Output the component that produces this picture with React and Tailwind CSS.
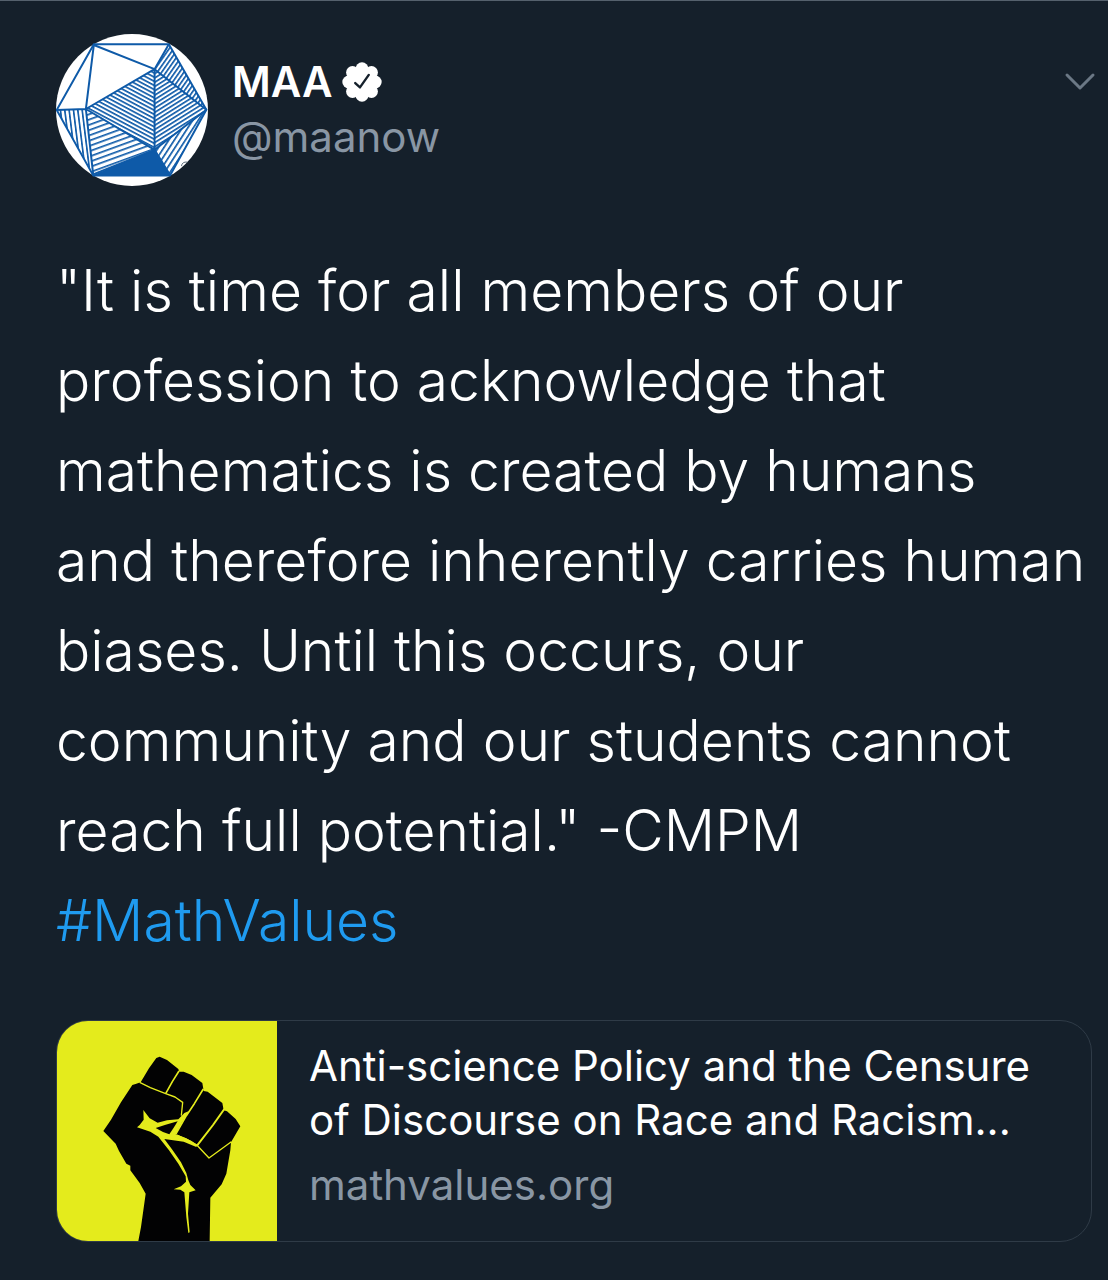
import React from "react";

const TWEET_LINES = [
  "\"It is time for all members of our",
  "profession to acknowledge that",
  "mathematics is created by humans",
  "and therefore inherently carries human",
  "biases. Until this occurs, our",
  "community and our students cannot",
  "reach full potential.\" -CMPM",
];

function Avatar() {
  return (
    <svg viewBox="28 24 458 458" className="size-[152px] shrink-0" role="img" aria-label="MAA logo">
      <defs>
        <pattern id="fallLeft" width="12" height="11" patternUnits="userSpaceOnUse" patternTransform="rotate(28 118 250)">
          <rect width="12" height="5" fill="#0e5aa8" />
        </pattern>
        <pattern id="fallRight" width="12" height="11" patternUnits="userSpaceOnUse" patternTransform="rotate(-32 325 373)">
          <rect width="12" height="5" fill="#0e5aa8" />
        </pattern>
        <pattern id="steepRight" width="11" height="12" patternUnits="userSpaceOnUse" patternTransform="rotate(35 368 55)">
          <rect width="5" height="12" fill="#0e5aa8" />
        </pattern>
        <pattern id="steepLeft" width="13" height="12" patternUnits="userSpaceOnUse" patternTransform="rotate(-7 118 250)">
          <rect width="5" height="12" fill="#0e5aa8" />
        </pattern>
        <pattern id="shallow" width="12" height="15" patternUnits="userSpaceOnUse" patternTransform="rotate(-20 140 447)">
          <rect width="12" height="5" fill="#0e5aa8" />
        </pattern>
        <pattern id="lowerRight" width="14" height="12" patternUnits="userSpaceOnUse" patternTransform="rotate(33 372 450)">
          <rect width="5" height="12" fill="#0e5aa8" />
        </pattern>
      </defs>
      <circle cx="257" cy="253" r="229" fill="#fff" />
      <path d="M118 250L325 130V373Z" fill="url(#fallLeft)" />
      <path d="M325 130L480 252L325 373Z" fill="url(#fallRight)" />
      <path d="M368 55L325 130L480 252Z" fill="url(#steepRight)" />
      <path d="M30 253H118L140 447Z" fill="url(#steepLeft)" />
      <path d="M118 250L325 373L140 447Z" fill="url(#shallow)" />
      <path d="M325 373L480 252L372 450Z" fill="url(#lowerRight)" />
      <path d="M140 449L325 371L374 451Z" fill="#0e5aa8" />
      <g fill="none" stroke="#0e5aa8" strokeWidth="6" strokeLinejoin="round">
        <path d="M142 55H368L481 252L372 450H140L30 253Z" />
        <path d="M142 57L325 130L368 55M142 57L118 250L30 253M118 250L325 130V373L118 250L140 447L325 373L372 450M325 130L481 252L325 373" />
      </g>
      <path d="M406 422q2-14 18-12" fill="none" stroke="#5b6b79" strokeWidth="3" />
    </svg>
  );
}

function VerifiedBadge() {
  return (
    <svg viewBox="0 0 118 118" className="size-[40px]" role="img" aria-label="Verified account">
      <g fill="#fff">
        <circle cx="59" cy="59" r="46" />
        <circle cx="59" cy="20" r="19" />
        <circle cx="87" cy="31" r="19" />
        <circle cx="98" cy="59" r="19" />
        <circle cx="87" cy="87" r="19" />
        <circle cx="59" cy="98" r="19" />
        <circle cx="31" cy="87" r="19" />
        <circle cx="20" cy="59" r="19" />
        <circle cx="31" cy="31" r="19" />
      </g>
      <path d="M39 62L53 75L79 38" fill="none" stroke="#15202b" strokeWidth="7" strokeLinecap="round" strokeLinejoin="round" />
    </svg>
  );
}

function RaisedFist() {
  return (
    <svg viewBox="20 22 660 660" className="size-[220px] shrink-0 bg-[#e4eb1c]" role="img" aria-label="Raised fist">
      <path d="M264 682L272 640L286 540L268 508L240 470V456L228 450L206 412L196 390L180 374L159 352L182 318L212 266L246 214L258 210L271 206L296 164L318 133L328 129L350 139L384 166L387 174L400 174L424 184L456 208L460 232L472 234L516 268L520 290L530 293L556 316L570 338L542 386L540 410L528 480L514 512L480 552L478 682Z" fill="#020203" />
      <g fill="none" stroke="#e4eb1c" strokeWidth="4" strokeLinejoin="round">
        <path d="M268 206L300 222L346 240L374 250L397 266L393 306" />
        <path d="M386 172L366 204L346 240" strokeWidth="5" />
        <path d="M459 226L432 270L408 306L376 362" strokeWidth="5" />
        <path d="M522 286L488 334L440 396" strokeWidth="6" />
        <path d="M380 364L420 382L440 395L476 433L508 410L543 384" />
      </g>
      <g fill="#e4eb1c">
        <path d="M279 289L298 314L322 327L350 320L384 317L402 298L416 292L394 328L376 362L408 374L442 394L438 400L400 384L342 376L366 408L392 446L408 478L414 500L420 514L436 530L417 536L413 600L418 656L414 658L408 610L402 536L390 528L370 527L392 518L407 504L406 488L384 450L356 410L324 369L300 354L260 341L268 334L280 318Z" />
      </g>
      <path d="M316 343L346 333L382 323L370 342L357 362L338 355Z" fill="#020203" />
    </svg>
  );
}

export default function App() {
  return (
    <main className="min-h-screen border-t border-[#55616d] bg-[#15202b] font-['Inter',sans-serif] text-white">
      <article className="pt-[33px] pr-4 pb-9 pl-14">
        <header className="flex items-start">
          <Avatar />
          <div className="ml-6 flex-1 pt-[21px]">
            <div className="flex items-center gap-2.5">
              <h1 className="text-[42px] leading-[54px] font-semibold">MAA</h1>
              <VerifiedBadge />
            </div>
            <p className="text-[42px] leading-[56px] text-[#8996a4]">@maanow</p>
          </div>
          <button type="button" aria-label="More options" className="-mr-2 mt-[30px] flex h-9 w-10 items-center justify-center">
            <svg viewBox="0 0 34 24" className="h-6 w-[34px]" fill="none" stroke="#6b7885" strokeWidth="3" strokeLinecap="round" strokeLinejoin="round" aria-hidden="true">
              <path d="M4 5L17 18L30 5" />
            </svg>
          </button>
        </header>

        <p className="mt-[60px] text-[57px] leading-[90px] font-light whitespace-nowrap">
          {TWEET_LINES.map((line) => (
            <span key={line} className="block">{line}</span>
          ))}
          <a href="#MathValues" className="text-[#1f9bf0]">#MathValues</a>
        </p>

        <a href="#mathvalues.org" className="mt-[54px] flex overflow-hidden rounded-[32px] border border-[#2f3b47]">
          <RaisedFist />
          <span className="flex flex-col pt-[18px] pl-8">
            <span className="text-[42px] leading-[54px] whitespace-nowrap">
              Anti-science Policy and the Censure
              <br />
              of Discourse on Race and Racism...
            </span>
            <span className="mt-2.5 text-[42px] leading-[56px] text-[#8996a4]">mathvalues.org</span>
          </span>
        </a>
      </article>
    </main>
  );
}
